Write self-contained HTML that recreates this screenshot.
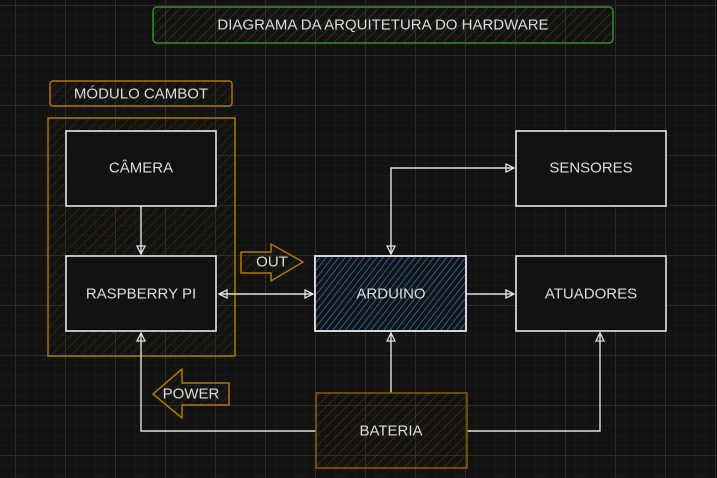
<!DOCTYPE html>
<html><head><meta charset="utf-8"><style>
html,body{margin:0;padding:0;background:#121212;width:717px;height:478px;overflow:hidden}
svg{display:block}
text{font-family:"Liberation Sans",sans-serif;fill:#dcdcdc;text-anchor:middle;dominant-baseline:central}
</style></head><body>
<svg width="717" height="478" viewBox="0 0 717 478" xmlns="http://www.w3.org/2000/svg">
<defs>
<pattern id="minor" width="10" height="10" patternUnits="userSpaceOnUse" x="5" y="5">
<path d="M0 0H10M0 0V10" stroke="#1e1e1e" stroke-width="1" fill="none"/></pattern>
<pattern id="major" width="50" height="50" patternUnits="userSpaceOnUse" x="15" y="5">
<path d="M0 0.5H50M0.5 0V50" stroke="#2c2c2c" stroke-width="1" fill="none"/></pattern>
<pattern id="hg" width="7" height="7" patternUnits="userSpaceOnUse" patternTransform="rotate(45)">
<path d="M0 0V7" stroke="#2a4a1e" stroke-width="1.2"/></pattern>
<pattern id="ho" width="7" height="7" patternUnits="userSpaceOnUse" patternTransform="rotate(45)">
<path d="M0 0V7" stroke="#3f2c10" stroke-width="1.2"/></pattern>
<pattern id="hb" width="5" height="5" patternUnits="userSpaceOnUse" patternTransform="rotate(38)">
<path d="M0 0V5" stroke="#2e66a6" stroke-width="1.8"/></pattern>
<pattern id="hob" width="7" height="7" patternUnits="userSpaceOnUse" patternTransform="rotate(45)">
<path d="M0 0V7" stroke="#4a350c" stroke-width="1.3"/></pattern>
<marker id="ar" markerWidth="10" markerHeight="10" refX="9" refY="5" orient="auto" markerUnits="userSpaceOnUse">
<path d="M1 1L9 5L1 9Z" fill="none" stroke="#e0e0e0" stroke-width="1.3"/></marker>
<marker id="as" markerWidth="10" markerHeight="10" refX="1" refY="5" orient="auto" markerUnits="userSpaceOnUse">
<path d="M9 1L1 5L9 9Z" fill="none" stroke="#e0e0e0" stroke-width="1.3"/></marker>
</defs>
<rect width="717" height="478" fill="url(#minor)"/>
<rect width="717" height="478" fill="url(#major)"/>

<rect x="153" y="7" width="460" height="36" rx="4" fill="url(#hg)" stroke="#3f8a2a" stroke-width="1.5"/>
<text x="383" y="25" font-size="15">DIAGRAMA DA ARQUITETURA DO HARDWARE</text>

<rect x="50" y="81" width="182" height="25" rx="3" fill="url(#ho)" stroke="#b07600" stroke-width="1.5"/>
<text x="141" y="94" font-size="15">MÓDULO CAMBOT</text>

<rect x="48" y="118" width="187" height="238" fill="url(#ho)" stroke="#b07600" stroke-width="1.5"/>

<g stroke="#e0e0e0" stroke-width="1.4" fill="none">
<path d="M141 206V254" marker-end="url(#ar)"/>
<path d="M219 294H313" marker-end="url(#ar)" marker-start="url(#as)"/>
<path d="M391 254V168H514" marker-start="url(#as)" marker-end="url(#ar)"/>
<path d="M466 294H514" marker-end="url(#ar)"/>
<path d="M391 393V333" marker-end="url(#ar)"/>
<path d="M316 431H141V333" marker-end="url(#ar)"/>
<path d="M467 431H600V333" marker-end="url(#ar)"/>
</g>

<g stroke="#e6e6e6" stroke-width="1.6">
<rect x="66" y="131" width="150" height="75" fill="#121212"/>
<rect x="66" y="256" width="150" height="75" fill="#121212"/>
<rect x="516" y="131" width="150" height="75" fill="#121212"/>
<rect x="516" y="256" width="150" height="75" fill="#121212"/>
<rect x="315" y="256" width="151" height="75" fill="#121212"/>
<rect x="315" y="256" width="151" height="75" fill="url(#hb)"/>
</g>
<rect x="316" y="393" width="151" height="75" fill="url(#hob)" stroke="#8a6000" stroke-width="1.5"/>

<text x="141" y="168" font-size="15">CÂMERA</text>
<text x="141" y="294" font-size="15">RASPBERRY PI</text>
<text x="391" y="294" font-size="15">ARDUINO</text>
<text x="591" y="168" font-size="15">SENSORES</text>
<text x="591" y="294" font-size="15">ATUADORES</text>
<text x="391" y="431" font-size="15">BATERIA</text>

<path d="M241 252H271V244L303 262L271 281V273H241Z" fill="url(#ho)" stroke="#b07600" stroke-width="1.5" stroke-linejoin="round"/>
<text x="272" y="262" font-size="15">OUT</text>
<path d="M229 383H182V369L153 394L182 418V405H229Z" fill="url(#ho)" stroke="#b07600" stroke-width="1.5" stroke-linejoin="round"/>
<text x="191" y="394" font-size="15">POWER</text>
</svg>
</body></html>
